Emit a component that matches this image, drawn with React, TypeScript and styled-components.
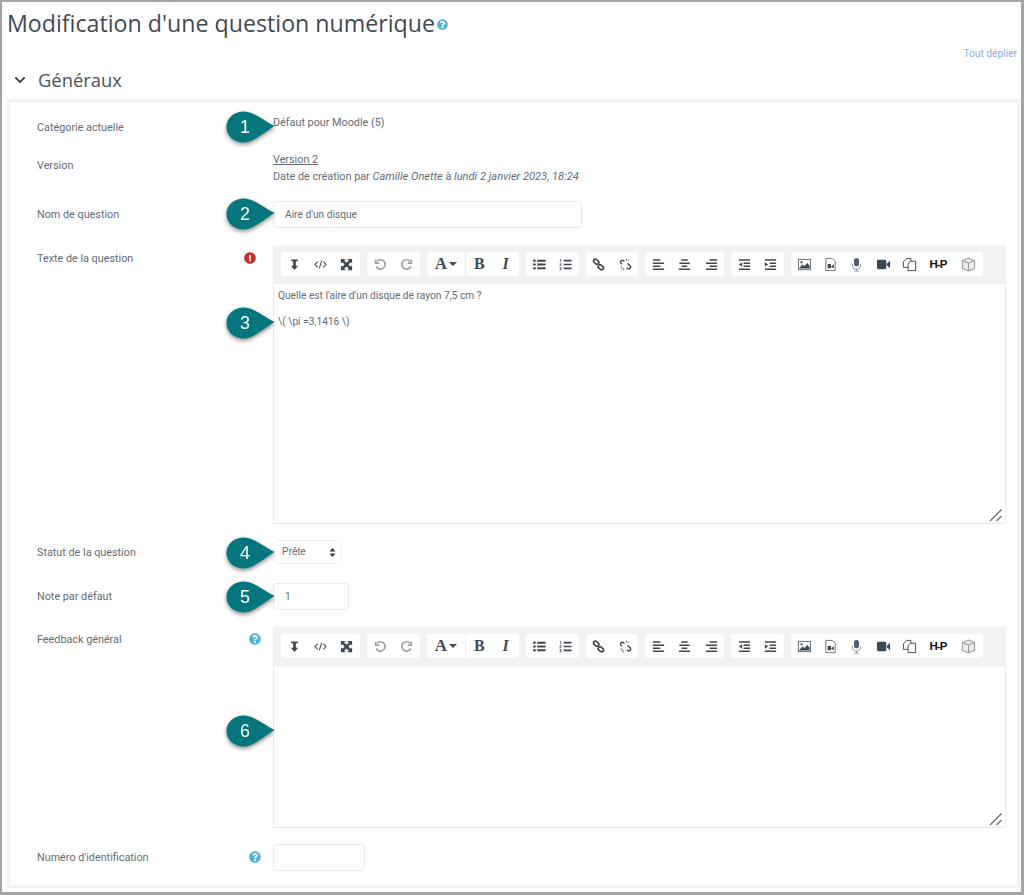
import React from "react";
import styled, { createGlobalStyle } from "styled-components";
import { FaQuestionCircle, FaExclamationCircle, FaChevronDown } from "react-icons/fa";

const Global = createGlobalStyle`
  html, body { margin: 0; padding: 0; background: #fff; }
  * { box-sizing: border-box; }
`;

const Frame = styled.div`
  width: 1024px;
  height: 895px;
  border: solid #a4a4a4;
  border-width: 2px 3px 3px 2px;
  padding: 0 1px 0 5px;
  background: #fff;
  font-family: Roboto, "Liberation Sans", sans-serif;
  font-size: 10.8px;
  color: #626c76;
  overflow: hidden;
`;
const TitleRow = styled.div`
  display: flex;
  align-items: center;
  height: 44px;
  padding-bottom: 2px;
`;
const Title = styled.h2`
  margin: 0;
  font: 400 23.2px/30px "Open Sans", sans-serif;
  color: #3f4a54;
`;
const TitleHelp = styled.span`
  display: inline-flex;
  margin: 3px 0 0 2px;
  color: #51b3dc;
  font-size: 11px;
`;
const ExpandRow = styled.div`
  display: flex;
  justify-content: flex-end;
  height: 16px;
  padding-right: 3px;
  line-height: 16px;
`;
const ExpandLink = styled.a`
  color: #7fb2ee;
  font-size: 10.2px;
`;
const SectionHead = styled.div`
  display: flex;
  align-items: center;
  gap: 12px;
  height: 37px;
  padding: 0 0 2px 7px;
  color: #3f4a54;
`;
const SectionTitle = styled.h3`
  margin: 0;
  font: 400 18.4px/24px "Open Sans", sans-serif;
  color: #4a545e;
`;
const Fieldset = styled.div`
  border: 3px solid #f3f3f3;
  height: 789px;
  padding: 12px 11px 0 27px;
`;
const Row = styled.div<{ $after: number }>`
  display: grid;
  grid-template-columns: 236px 1fr;
  margin-bottom: ${(p) => p.$after}px;
`;
const LabelCell = styled.div<{ $pad: number }>`
  display: flex;
  justify-content: space-between;
  align-items: flex-start;
  padding-top: ${(p) => p.$pad}px;
  line-height: 17px;
`;
const HelpIcon = styled.span<{ $error?: boolean }>`
  display: inline-flex;
  margin: 2px ${(p) => (p.$error ? 17 : 12)}px 0 0;
  color: ${(p) => (p.$error ? "#c9302c" : "#51b3dc")};
  font-size: 12px;
`;
const FieldCell = styled.div`
  position: relative;
  min-width: 0;
`;
const StaticText = styled.div`
  line-height: 17px;
  & em { font-style: italic; font-size: 11.1px; }
`;
const VersionLink = styled.span`
  text-decoration: underline;
`;
const TextInput = styled.input<{ $w: number }>`
  display: block;
  width: ${(p) => p.$w}px;
  height: 27px;
  border: 1px solid #e8ebee;
  border-radius: 3px;
  padding: 0 11px;
  background: #fff;
  font: 400 10.2px Roboto, sans-serif;
  color: #626c76;
  outline: none;
`;
const SelectWrap = styled.div`
  position: relative;
  width: 69px;
  height: 24px;
`;
const Select = styled.select`
  appearance: none;
  display: block;
  width: 100%;
  height: 100%;
  border: 1px solid #f0f1f2;
  border-radius: 5px;
  padding: 0 0 2px 8px;
  background: #fff;
  font: 400 10px "Liberation Sans", sans-serif;
  color: #626c76;
  outline: none;
`;
const SelectCarets = styled.svg`
  position: absolute;
  right: 6px;
  top: 8px;
  width: 7px;
  height: 9px;
  fill: #3a3f45;
`;
const Badge = styled.div<{ $top: number }>`
  position: absolute;
  left: -47px;
  top: ${(p) => p.$top}px;
  width: 49px;
  height: 34px;
  z-index: 2;
  filter: drop-shadow(0 2px 2px rgba(0, 0, 0, 0.45));
`;
const BadgeShape = styled.svg`
  display: block;
  width: 49px;
  height: 34px;
  fill: #05767e;
`;
const BadgeNum = styled.span`
  position: absolute;
  left: 1px;
  top: 0;
  width: 36px;
  height: 32px;
  text-align: center;
  font: 400 18px/32px "Liberation Sans", sans-serif;
  color: #fff;
`;
const Editor = styled.div<{ $h: number }>`
  position: relative;
  width: 733px;
  height: ${(p) => p.$h}px;
  border: 1px solid #e8ebee;
  border-radius: 2px;
`;
const Toolbar = styled.div`
  display: flex;
  gap: 7px;
  height: 39px;
  margin: -1px -1px 0;
  padding: 7px 8px 0;
  background: #f1f2f2;
  border-bottom: 1px solid #eceded;
`;
const Group = styled.div`
  display: flex;
  height: 24px;
  background: #fff;
  border-radius: 3px;
`;
const Btn = styled.span<{ $w?: number; $sep?: boolean }>`
  display: flex;
  align-items: center;
  justify-content: center;
  gap: 2px;
  width: ${(p) => p.$w ?? 26.35}px;
  height: 24px;
  border-right: ${(p) => (p.$sep ? "1px solid #eceded" : "none")};
  color: #3c4955;
`;
const Ico = styled.svg<{ $muted?: boolean }>`
  display: block;
  width: 15px;
  height: 15px;
  color: ${(p) => (p.$muted ? "#9da2a6" : "#3c4955")};
`;
const Serif = styled.span<{ $italic?: boolean; $size?: number }>`
  font: ${(p) => (p.$italic ? "italic" : "normal")} 700 ${(p) => p.$size ?? 15}px/24px "Liberation Serif", serif;
  color: #3f4c58;
`;
const Caret = styled.span`
  width: 0;
  height: 0;
  border: 4px solid transparent;
  border-top: 4px solid #3c4955;
  border-bottom: 0;
`;
const HP = styled.span`
  font: 700 11.5px/24px "Liberation Sans", sans-serif;
  color: #111417;
  letter-spacing: -0.9px;
`;
const Content = styled.div`
  padding: 3px 4px;
  font-size: 10.2px;
  line-height: 17px;
  & p { margin: 0 0 9px; }
`;
const Grip = styled.svg`
  position: absolute;
  right: 2px;
  bottom: 1px;
  width: 14px;
  height: 14px;
  stroke: #6f6f6f;
  stroke-width: 1.4;
`;

const S = { fill: "none", stroke: "currentColor", strokeWidth: 1.5 } as const;

const I = {
  collapse: (
    <Ico viewBox="0 0 16 16" fill="currentColor"><path d="M4.6 2.6h6.8v2H9.4v4.8h2.4L8 13.8 4.2 9.4h2.4V4.6h-2z" /></Ico>
  ),
  html: (
    <Ico viewBox="0 0 16 16" {...S} strokeWidth={1.1}><path d="M5 5 2 8l3 3M11 5l3 3-3 3M9.3 3.8 6.7 12.2" /></Ico>
  ),
  full: (
    <Ico viewBox="0 0 16 16" fill="currentColor">
      <path d="M2 2h5L5.5 3.6 8 6 10.5 3.6 9 2h5v5l-1.6-1.5L10 8l2.4 2.5L14 9v5H9l1.5-1.6L8 10l-2.5 2.4L7 14H2V9l1.6 1.5L6 8 3.6 5.5 2 7z" />
    </Ico>
  ),
  undo: (
    <Ico viewBox="0 0 16 16" $muted {...S} strokeWidth={1.8}><path d="M4.2 4.6A5 5 0 1 1 3.4 10" /><path d="M2.8 2.6v4h4" /></Ico>
  ),
  redo: (
    <Ico viewBox="0 0 16 16" $muted {...S} strokeWidth={1.8}><path d="M11.8 4.6A5 5 0 1 0 12.6 10" /><path d="M13.2 2.6v4h-4" /></Ico>
  ),
  ul: (
    <Ico viewBox="0 0 16 16" fill="currentColor">
      <circle cx="2.6" cy="4" r="1.4" /><circle cx="2.6" cy="8" r="1.4" /><circle cx="2.6" cy="12" r="1.4" />
      <path d="M5.5 3h9v2h-9zM5.5 7h9v2h-9zM5.5 11h9v2h-9z" />
    </Ico>
  ),
  ol: (
    <Ico viewBox="0 0 16 16" fill="currentColor">
      <path d="M6 3h8.5v1.8H6zM6 7.1h8.5v1.8H6zM6 11.2h8.5V13H6z" />
      <path d="M2 2.5h1.3v3.2H2.6V3.2H2zM1.6 7h2v.6l-1.2 1.2h1.2v.6h-2v-.6l1.2-1.2H1.6zM1.6 11h2v3h-2v-.6h1.3v-.6h-.9v-.6h.9v-.6H1.6z" />
    </Ico>
  ),
  link: (
    <Ico viewBox="0 0 16 16" {...S} strokeWidth={1.8}>
      <rect x="2.4" y="3" width="6.2" height="4" rx="2" transform="rotate(40 5.5 5)" />
      <rect x="7.4" y="9" width="6.2" height="4" rx="2" transform="rotate(40 10.5 11)" />
    </Ico>
  ),
  unlink: (
    <Ico viewBox="0 0 16 16" {...S} strokeWidth={1.5}>
      <path d="M6.8 4.8 5.9 3.9a2 2 0 0 0-2.8 2.8l1 1" />
      <path d="M9.4 11.4l.9.9a2 2 0 0 0 2.8-2.8L11.6 8a2 2 0 0 0-1.8-.6" />
      <path d="M9 1.8v2M11.4 2.8l-1 1.4M2.6 10.8h2M3.4 13.2l1.4-1.1M6 14.2v-2" strokeWidth={0.9} />
    </Ico>
  ),
  alignL: (
    <Ico viewBox="0 0 16 16" fill="currentColor"><path d="M2 2.5h8v1.6H2zM2 5.8h12v1.6H2zM2 9h8v1.6H2zM2 12.2h12v1.6H2z" /></Ico>
  ),
  alignC: (
    <Ico viewBox="0 0 16 16" fill="currentColor"><path d="M4.5 2.5h7v1.6h-7zM2.5 5.8h11v1.6h-11zM5 9h6v1.6H5zM2 12.2h12v1.6H2z" /></Ico>
  ),
  alignR: (
    <Ico viewBox="0 0 16 16" fill="currentColor"><path d="M6 2.5h8v1.6H6zM2 5.8h12v1.6H2zM6 9h8v1.6H6zM2 12.2h12v1.6H2z" /></Ico>
  ),
  outdent: (
    <Ico viewBox="0 0 16 16" fill="currentColor"><path d="M2 2.5h12v1.6H2zM7 5.8h7v1.6H7zM7 9h7v1.6H7zM2 12.2h12v1.6H2zM5.5 5.5v5L2 8z" /></Ico>
  ),
  indent: (
    <Ico viewBox="0 0 16 16" fill="currentColor"><path d="M2 2.5h12v1.6H2zM7 5.8h7v1.6H7zM7 9h7v1.6H7zM2 12.2h12v1.6H2zM2 5.5v5L5.5 8z" /></Ico>
  ),
  image: (
    <Ico viewBox="0 0 16 16">
      <rect x="1.5" y="2.5" width="13" height="11" fill="none" stroke="#5c6975" strokeWidth="1" />
      <circle cx="4.8" cy="5.6" r="1.2" fill="currentColor" />
      <path d="M2.5 11.5 6 8l2 1.7L11 6.5l2.5 2.8v3H2.5z" fill="currentColor" />
    </Ico>
  ),
  file: (
    <Ico viewBox="0 0 16 16">
      <path d="M3 1.5h7l3 3v10H3z" fill="none" stroke="#6a7580" strokeWidth="1" />
      <path d="M5 7.5h3.5v4.5H5zM8.5 10l3-2.2v4.4z" fill="currentColor" />
    </Ico>
  ),
  mic: (
    <Ico viewBox="0 0 16 16">
      <rect x="5.3" y="1" width="5.4" height="9" rx="2.7" fill="#4f6070" />
      <path d="M3.7 7.5v1a4.3 4.3 0 0 0 8.6 0v-1M8 13v2M5.5 15h5" fill="none" stroke="#8b949c" strokeWidth="1" />
    </Ico>
  ),
  video: (
    <Ico viewBox="0 0 16 16" fill="currentColor">
      <rect x="1" y="3" width="10" height="10" rx="1.5" /><path d="M11.5 7.2 15 4v8l-3.5-3.2z" />
    </Ico>
  ),
  copy: (
    <Ico viewBox="0 0 16 16" fill="none" stroke="currentColor" strokeWidth="1">
      <path d="M5 1.5h4.5v3M5 1.5 1.5 5v6H6" /><path d="M9 4.5h5.5V14.5H6.5V7.5z" />
    </Ico>
  ),
  cube: (
    <Ico viewBox="0 0 16 16" fill="#e9ebec" stroke="#94999d" strokeWidth="1.1">
      <path d="M8 1 14.5 3.8v8.4L8 15 1.5 12.2V3.8z" /><path d="M1.5 3.8 8 6.6l6.5-2.8M8 6.6V15" fill="none" />
    </Ico>
  ),
};

const Toolbars = () => (
  <Toolbar>
    <Group>
      <Btn>{I.collapse}</Btn>
      <Btn>{I.html}</Btn>
      <Btn>{I.full}</Btn>
    </Group>
    <Group>
      <Btn>{I.undo}</Btn>
      <Btn>{I.redo}</Btn>
    </Group>
    <Group>
      <Btn $w={39.5} $sep>
        <Serif $size={17}>A</Serif>
        <Caret />
      </Btn>
      <Btn><Serif $size={16}>B</Serif></Btn>
      <Btn><Serif $size={16} $italic>I</Serif></Btn>
    </Group>
    <Group>
      <Btn>{I.ul}</Btn>
      <Btn>{I.ol}</Btn>
    </Group>
    <Group>
      <Btn>{I.link}</Btn>
      <Btn>{I.unlink}</Btn>
    </Group>
    <Group>
      <Btn>{I.alignL}</Btn>
      <Btn>{I.alignC}</Btn>
      <Btn>{I.alignR}</Btn>
    </Group>
    <Group>
      <Btn>{I.outdent}</Btn>
      <Btn>{I.indent}</Btn>
    </Group>
    <Group>
      <Btn>{I.image}</Btn>
      <Btn>{I.file}</Btn>
      <Btn>{I.mic}</Btn>
      <Btn>{I.video}</Btn>
      <Btn>{I.copy}</Btn>
      <Btn $w={30.5}><HP>H-P</HP></Btn>
      <Btn $w={30}>{I.cube}</Btn>
    </Group>
  </Toolbar>
);

const Callout = ({ n, top }: { n: number; top: number }) => (
  <Badge $top={top}>
    <BadgeShape viewBox="0 0 49 34">
      <path d="M0.5 16C0.5 7 8 0.5 18 0.5 27 0.5 37 9 48.5 15 37 22 27 31.5 18 31.5 8 31.5 0.5 25 0.5 16z" />
    </BadgeShape>
    <BadgeNum>{n}</BadgeNum>
  </Badge>
);

const GripMark = () => (
  <Grip viewBox="0 0 14 14"><path d="M1 13 12.5 1.5M7.5 13l5-5" /></Grip>
);

export default function App() {
  return (
    <Frame>
      <Global />
      <TitleRow>
        <Title>Modification d'une question numérique</Title>
        <TitleHelp><FaQuestionCircle /></TitleHelp>
      </TitleRow>
      <ExpandRow><ExpandLink>Tout déplier</ExpandLink></ExpandRow>
      <SectionHead>
        <FaChevronDown size={12} />
        <SectionTitle>Généraux</SectionTitle>
      </SectionHead>
      <Fieldset>
        <Row $after={15}>
          <LabelCell $pad={5}>Catégorie actuelle</LabelCell>
          <FieldCell>
            <Callout n={1} top={-3} />
            <StaticText>Défaut pour Moodle (5)</StaticText>
          </FieldCell>
        </Row>
        <Row $after={16}>
          <LabelCell $pad={6}>Version</LabelCell>
          <FieldCell>
            <StaticText><VersionLink>Version 2</VersionLink></StaticText>
            <StaticText>
              Date de création par <em>Camille Onette</em> à <em>lundi 2 janvier 2023, 18:24</em>
            </StaticText>
          </FieldCell>
        </Row>
        <Row $after={17}>
          <LabelCell $pad={5}>Nom de question</LabelCell>
          <FieldCell>
            <Callout n={2} top={-3} />
            <TextInput $w={309} readOnly defaultValue="Aire d'un disque" />
          </FieldCell>
        </Row>
        <Row $after={16}>
          <LabelCell $pad={5}>
            Texte de la question
            <HelpIcon $error><FaExclamationCircle /></HelpIcon>
          </LabelCell>
          <FieldCell>
            <Callout n={3} top={62} />
            <Editor $h={279}>
              <Toolbars />
              <Content>
                <p>Quelle est l'aire d'un disque de rayon 7,5 cm ?</p>
                <p>\( \pi =3,1416 \)</p>
              </Content>
              <GripMark />
            </Editor>
          </FieldCell>
        </Row>
        <Row $after={19}>
          <LabelCell $pad={4}>Statut de la question</LabelCell>
          <FieldCell>
            <Callout n={4} top={-3} />
            <SelectWrap>
              <Select defaultValue="Prête"><option>Prête</option></Select>
              <SelectCarets viewBox="0 0 7 9"><path d="M3.5 0 6.5 3.5H.5zM3.5 9 .5 5.5h6z" /></SelectCarets>
            </SelectWrap>
          </FieldCell>
        </Row>
        <Row $after={17}>
          <LabelCell $pad={5}>Note par défaut</LabelCell>
          <FieldCell>
            <Callout n={5} top={-2} />
            <TextInput $w={76} readOnly defaultValue="1" />
          </FieldCell>
        </Row>
        <Row $after={16}>
          <LabelCell $pad={4}>
            Feedback général
            <HelpIcon><FaQuestionCircle /></HelpIcon>
          </LabelCell>
          <FieldCell>
            <Callout n={6} top={88} />
            <Editor $h={201}>
              <Toolbars />
              <GripMark />
            </Editor>
          </FieldCell>
        </Row>
        <Row $after={0}>
          <LabelCell $pad={5}>
            Numéro d'identification
            <HelpIcon><FaQuestionCircle /></HelpIcon>
          </LabelCell>
          <FieldCell>
            <TextInput $w={92} readOnly defaultValue="" />
          </FieldCell>
        </Row>
      </Fieldset>
    </Frame>
  );
}
